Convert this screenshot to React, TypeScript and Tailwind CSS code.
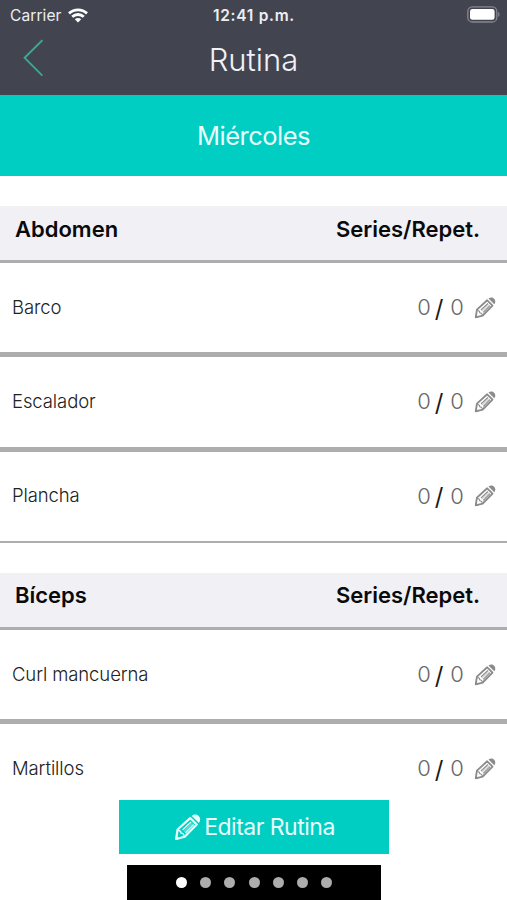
const sections = [
  { title: 'Abdomen', exercises: ['Barco', 'Escalador', 'Plancha'] },
  { title: 'Bíceps', exercises: ['Curl mancuerna', 'Martillos'] },
];

const days = ['Miércoles', 'Jueves', 'Viernes', 'Sábado', 'Domingo', 'Lunes', 'Martes'];
const activeDay = 0;

function PencilIcon({ className }: { className: string }) {
  return (
    <svg viewBox="0 0 24 24" className={className} fill="none" stroke="currentColor">
      <path d="M3.2 13.8 14.4 3.6l5.8 5.8L9.5 20.2l-7.6 2Z" strokeWidth="2" strokeLinejoin="round" />
      <path d="M3.6 14.6c2 .2 2.8.9 2.7 2.5 1.6 0 2.5.8 2.7 2.5" strokeWidth="1.1" />
      <path d="m7.6 14.2 7.6-7.1M10.1 16.7l7.3-7.3" strokeWidth="1.2" />
      <path d="m8.8 15.5 7.6-7.2" strokeWidth="1.2" strokeOpacity="0.4" />
      <path d="m1.2 23 .9-3.9 2.9 3Z" fill="currentColor" stroke="none" />
      <path d="M15.8 1.7c2.2-1.8 4.7-1.3 6.1.1 1.5 1.5 2 4 .2 6.2Z" fill="currentColor" stroke="none" />
    </svg>
  );
}

function StatusBar() {
  return (
    <div className="grid h-[30px] grid-cols-3 items-center pl-[10px] pr-[7px] text-[15.5px] text-[#eeeef2]">
      <div className="flex items-center gap-[6px]">
        <span className="pt-px tracking-[0.1px]">Carrier</span>
        <svg viewBox="0 0 20 15" className="h-[15px] w-5" fill="none" stroke="white" strokeWidth="2.8">
          <path d="M1 5.4C6.2.6 13.8.6 19 5.4" />
          <path d="M4.2 8.8c3.4-3.1 8.2-3.1 11.6 0" />
          <path d="m10 14.6-3.2-3.3c1.8-1.6 4.6-1.6 6.4 0Z" fill="white" stroke="none" />
        </svg>
      </div>
      <span className="pt-px pr-[2px] text-center font-semibold tracking-[0.7px] whitespace-nowrap">12:41 p.m.</span>
      <svg viewBox="0 0 33 17" className="-mt-[2px] h-[17px] w-[33px] justify-self-end">
        <rect x="0.8" y="0.8" width="29" height="15.2" rx="4.6" fill="none" stroke="#85878f" strokeWidth="1.3" />
        <rect x="3" y="3" width="24.6" height="10.8" rx="2.4" fill="white" />
        <path d="M31.2 6c1.8.6 1.8 4.2 0 4.8Z" fill="#85878f" />
      </svg>
    </div>
  );
}

function ExerciseRow({ name }: { name: string }) {
  return (
    <li className="flex h-[94.3px] items-center justify-between border-t-[3px] border-b-2 border-[#adadad] bg-white pr-[11px] pl-3">
      <span className="text-[18.5px] font-light tracking-[-0.1px] text-[#222]">{name}</span>
      <div className="flex items-center text-[22px]">
        <span className="w-[14px] text-center font-light text-[#666]">0</span>
        <span className="w-[19px] pt-[2px] pr-[3px] text-center text-2xl text-[#1a1a1a]">/</span>
        <span className="w-[14px] text-center font-light text-[#666]">0</span>
        <PencilIcon className="ml-[10px] size-[22px] text-[#8b8b8b]" />
      </div>
    </li>
  );
}

export default function App() {
  return (
    <div className="relative flex h-[900px] w-full flex-col overflow-hidden bg-white font-['Inter','Liberation_Sans',sans-serif]">
      <header className="h-[95px] shrink-0 bg-[#424550]">
        <StatusBar />
        <div className="grid h-[60px] grid-cols-[1fr_auto_1fr] items-center">
          <button aria-label="Atrás" className="ml-[23px] w-5 pb-[5px]">
            <svg viewBox="0 0 20 38" className="h-[38px] w-5" fill="none" stroke="#3fa796" strokeWidth="1.9">
              <path d="M19.4 1.2 1.6 18.8l17.8 17.9" />
            </svg>
          </button>
          <h1 className="text-[31px] font-light text-[#f1f1f8]">Rutina</h1>
        </div>
      </header>

      <div className="flex h-[81px] shrink-0 items-center justify-center bg-[#00cec3] pt-px text-[25.5px] tracking-[-0.5px] text-[#e9fdfb]">
        {days[activeDay]}
      </div>

      <main className="min-h-0 flex-1 overflow-hidden">
        {sections.map(section => (
          <section key={section.title} className="pt-[30px]">
            <div className="flex h-[54px] items-center justify-between bg-[#f0f0f5] pr-[27px] pb-[8px] pl-[15px] text-[22px] font-semibold text-[#0a0a0c]">
              <h2>{section.title}</h2>
              <span>Series/Repet.</span>
            </div>
            <ul>
              {section.exercises.map(exercise => (
                <ExerciseRow key={exercise} name={exercise} />
              ))}
            </ul>
          </section>
        ))}
      </main>

      {/* Bottom actions float over the list */}
      <div className="absolute inset-x-0 bottom-0 flex h-[111px] flex-col items-center bg-white pt-[11px]">
        <button className="flex h-[54px] w-[270px] items-center justify-center gap-[3px] bg-[#00cec3] pt-px pl-[2px] text-[23px] tracking-[-0.5px] text-[#e9fdfb]">
          <PencilIcon className="size-[27px]" />
          Editar Rutina
        </button>
        <div className="mt-[11px] flex h-[35px] w-[254px] items-center justify-center gap-[13.3px] bg-black pl-px">
          {days.map((day, i) => (
            <span
              key={day}
              className={`size-[11px] rounded-full ${i === activeDay ? 'bg-white' : 'bg-[#adadad]'}`}
            />
          ))}
        </div>
      </div>
    </div>
  );
}
